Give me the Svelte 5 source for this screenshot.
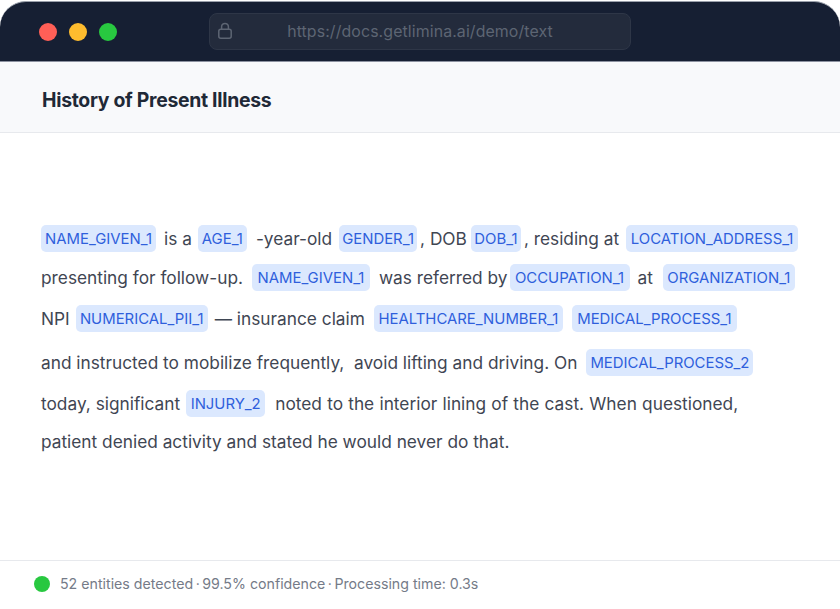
<script>
  const lines = [
    { height: 38, parts: [
      { tag: "NAME_GIVEN_1", width: 115 },
      { text: "is a", gap: 8 },
      { tag: "AGE_1", width: 49, gap: 6 },
      { text: "-year-old", gap: 9 },
      { tag: "GENDER_1", width: 78, gap: 7 },
      { text: ", DOB", gap: 3 },
      { tag: "DOB_1", width: 50, gap: 4 },
      { text: ", residing at", gap: 3 },
      { tag: "LOCATION_ADDRESS_1", width: 172, gap: 7 }
    ] },
    { height: 40, parts: [
      { text: "presenting for follow-up." },
      { tag: "NAME_GIVEN_1", width: 118, gap: 9 },
      { text: "was referred by", gap: 9 },
      { tag: "OCCUPATION_1", width: 120, gap: 2 },
      { text: "at", gap: 8 },
      { tag: "ORGANIZATION_1", width: 132, gap: 10 }
    ] },
    { height: 42, parts: [
      { text: "NPI" },
      { tag: "NUMERICAL_PII_1", width: 132, gap: 6 },
      { text: "— insurance claim", gap: 7 },
      { tag: "HEALTHCARE_NUMBER_1", width: 189, gap: 9 },
      { tag: "MEDICAL_PROCESS_1", width: 165, gap: 9 }
    ] },
    { height: 46, parts: [
      { text: "and instructed to mobilize frequently,  avoid lifting and driving. On" },
      { tag: "MEDICAL_PROCESS_2", width: 167, gap: 9 }
    ] },
    { height: 36, parts: [
      { text: "today, significant" },
      { tag: "INJURY_2", width: 79, gap: 6 },
      { text: "noted to the interior lining of the cast. When questioned,", gap: 10, wordSpacing: 0.4 }
    ] },
    { height: 40, parts: [
      { text: "patient denied activity and stated he would never do that." }
    ] }
  ];
</script>

<div class="window">
  <header class="chrome">
    <div class="dots">
      <span class="dot red"></span>
      <span class="dot yellow"></span>
      <span class="dot green"></span>
    </div>
    <div class="address">
      <svg class="lock" width="16" height="18" viewBox="0 0 16 18" fill="none" stroke="#5d6573" stroke-width="1.5">
        <rect x="1.8" y="7.2" width="12.4" height="9" rx="2" />
        <path d="M4.6 7V4.8a3.4 3.4 0 0 1 6.8 0V7" />
      </svg>
      <span class="url">https://docs.getlimina.ai/demo/text</span>
    </div>
  </header>

  <div class="title-bar">
    <h1>History of Present Illness</h1>
  </div>

  <main class="body">
    {#each lines as line}
      <div class="line" style="height: {line.height}px">
        {#each line.parts as part}
          {#if part.tag}
            <span class="tag" style="width: {part.width}px; margin-left: {part.gap ?? 0}px">{part.tag}</span>
          {:else}
            <span class="text" style="margin-left: {part.gap ?? 0}px; word-spacing: {part.wordSpacing ?? 0}px">{part.text}</span>
          {/if}
        {/each}
      </div>
    {/each}
  </main>

  <footer class="status">
    <span class="status-dot"></span>
    <span class="stats">
      <span>52 entities detected</span><span class="sep">·</span><span>99.5% confidence</span><span class="sep">·</span><span>Processing time: 0.3s</span>
    </span>
  </footer>
</div>

<style>
  :global(body) {
    margin: 0;
    background: #fff;
  }

  .window {
    display: flex;
    flex-direction: column;
    width: 840px;
    height: 609px;
    overflow: hidden;
    font-family: Inter, "Liberation Sans", sans-serif;
    background: #fff;
  }

  .chrome {
    position: relative;
    display: flex;
    align-items: center;
    flex: none;
    height: 61px;
    margin-top: 1px;
    padding-left: 39px;
    background: #161f33;
    border-top: 1px solid #9aa0ab;
    border-bottom: 1px solid #8c92a0;
    border-radius: 26px 26px 0 0;
    box-sizing: border-box;
  }

  .dots {
    display: flex;
    gap: 12px;
  }

  .dot {
    width: 18px;
    height: 18px;
    border-radius: 50%;
  }

  .red { background: #ff5f57; }
  .yellow { background: #febc2e; }
  .green { background: #28c840; }

  .address {
    position: absolute;
    left: 209px;
    top: 11px;
    width: 422px;
    height: 37px;
    display: flex;
    align-items: center;
    justify-content: center;
    box-sizing: border-box;
    background: #232b3c;
    border: 1px solid #2e3647;
    border-radius: 8px;
  }

  .lock {
    position: absolute;
    left: 7px;
    top: 8px;
  }

  .url {
    color: #5d6573;
    font-size: 15.9px;
    letter-spacing: 0.1px;
  }

  .title-bar {
    flex: none;
    display: flex;
    align-items: center;
    height: 71px;
    padding: 5px 0 0 42px;
    background: #f8f9fb;
    border-bottom: 1px solid #e7e9ed;
    box-sizing: border-box;
  }

  h1 {
    margin: 0;
    font-size: 19.4px;
    font-weight: 700;
    letter-spacing: -0.3px;
    color: #1f2937;
  }

  .body {
    flex: 1;
    padding: 86px 0 0 41px;
  }

  .line {
    display: flex;
    align-items: center;
    white-space: pre;
  }

  .text {
    font-size: 17.3px;
    color: #3f4653;
  }

  .tag {
    display: flex;
    align-items: center;
    justify-content: center;
    height: 27px;
    padding-top: 2px;
    box-sizing: border-box;
    font-size: 14.9px;
    color: #2f5fdc;
    background: #dbe8fe;
    border-radius: 5px;
  }

  .status {
    flex: none;
    display: flex;
    align-items: center;
    gap: 10px;
    height: 49px;
    padding: 0 0 3px 34px;
    box-sizing: border-box;
    border-top: 1px solid #e7e9ed;
    font-size: 14.2px;
    color: #757b88;
  }

  .status-dot {
    width: 16px;
    height: 16px;
    border-radius: 50%;
    background: #28c840;
  }

  .sep {
    margin: 0 2.5px;
  }
</style>
